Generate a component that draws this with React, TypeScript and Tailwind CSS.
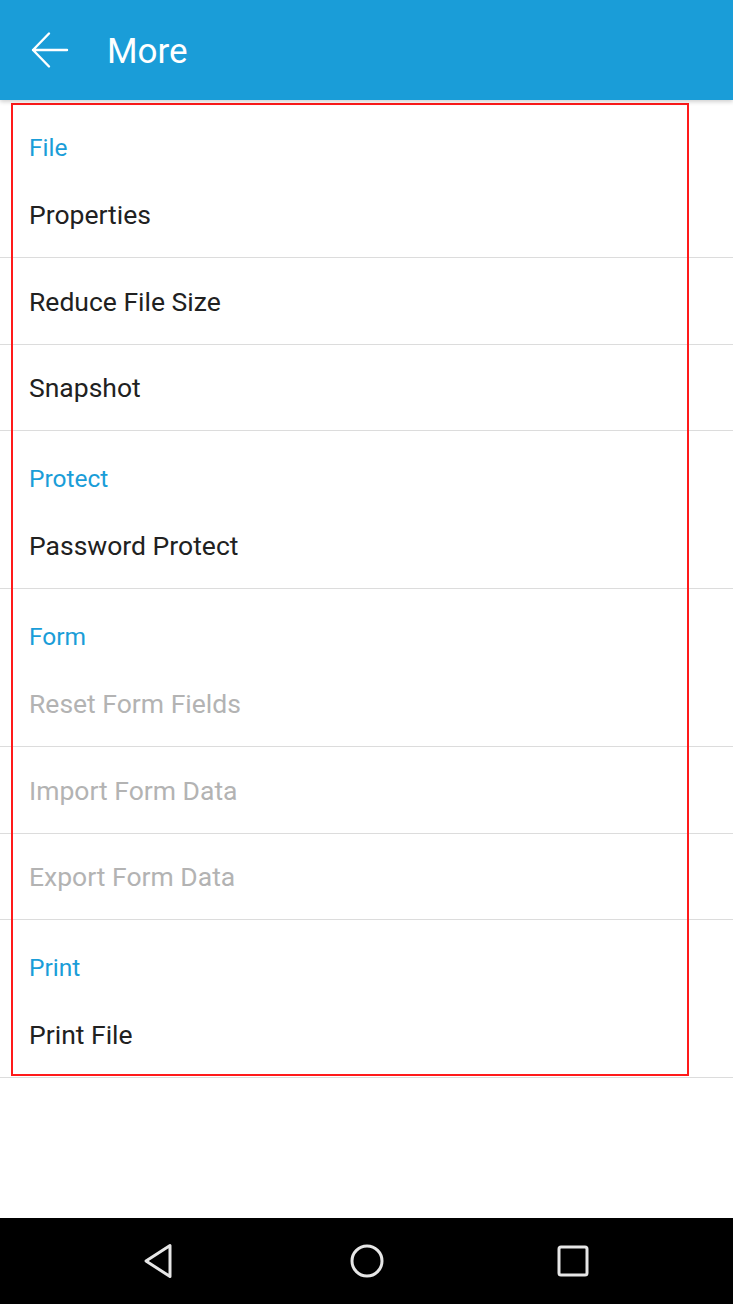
import { ReactNode } from "react";

type Row = { label: string; disabled?: boolean };
type Section = { title: string; rows: Row[] };

const sections: Section[] = [
  { title: "File", rows: [{ label: "Properties" }, { label: "Reduce File Size" }, { label: "Snapshot" }] },
  { title: "Protect", rows: [{ label: "Password Protect" }] },
  {
    title: "Form",
    rows: [
      { label: "Reset Form Fields", disabled: true },
      { label: "Import Form Data", disabled: true },
      { label: "Export Form Data", disabled: true },
    ],
  },
  { title: "Print", rows: [{ label: "Print File" }] },
];

const NavButton = ({ children }: { children: ReactNode }) => (
  <div className="flex w-[120px] items-center justify-center">{children}</div>
);

const App = () => {
  return (
    <div className="relative flex h-[1304px] w-[733px] flex-col bg-white font-['Roboto',sans-serif]">
      {/* top bar */}
      <div className="relative z-10 flex h-[100px] shrink-0 items-center bg-[#1a9dd8] shadow-[0_2px_4px_rgba(0,0,0,0.18)]">
        <svg width="38" height="38" viewBox="0 0 38 38" className="ml-[31px]" fill="none" stroke="white" strokeWidth="2.4" strokeLinecap="round" strokeLinejoin="round">
          <path d="M2 19h34M18 2.5 2 19l16 16.5" />
        </svg>
        <span className="ml-[38px] mt-[3px] text-[35px] leading-none text-white">More</span>
      </div>

      {/* list */}
      <div className="flex flex-col">
        {sections.map((s) => (
          <div key={s.title} className="flex flex-col">
            <div className="h-[71.5px] pl-[29px] pt-[34px] text-[24.5px] leading-[28px] text-[#1a9dd8]">{s.title}</div>
            {s.rows.map((r) => (
              <div
                key={r.label}
                className={`flex h-[86.5px] items-center border-b border-[#dcdcdc] pl-[29px] pt-[2px] text-[26.5px] ${
                  r.disabled ? "text-[#b3b3b3]" : "text-[#212121]"
                }`}
              >
                {r.label}
              </div>
            ))}
          </div>
        ))}
      </div>

      <div className="flex-1" />

      {/* android nav bar */}
      <div className="flex h-[86px] shrink-0 items-center justify-between bg-black px-[100px]">
        <NavButton>
          <svg width="34" height="36" viewBox="0 0 34 36" fill="none" stroke="#e6e6e6" strokeWidth="3" strokeLinejoin="round">
            <path d="M27 2.5v31L3 18z" />
          </svg>
        </NavButton>
        <NavButton>
          <svg width="36" height="36" viewBox="0 0 36 36" fill="none" stroke="#e6e6e6" strokeWidth="3">
            <circle cx="18" cy="18" r="15" />
          </svg>
        </NavButton>
        <NavButton>
          <svg width="32" height="32" viewBox="0 0 32 32" fill="none" stroke="#e6e6e6" strokeWidth="3">
            <rect x="2" y="2" width="28" height="28" rx="2" />
          </svg>
        </NavButton>
      </div>

      {/* red annotation frame */}
      <div className="pointer-events-none absolute left-[11px] top-[103px] h-[973px] w-[678px] border-2 border-[#ff1a1a]" />
    </div>
  );
};

export default App;
